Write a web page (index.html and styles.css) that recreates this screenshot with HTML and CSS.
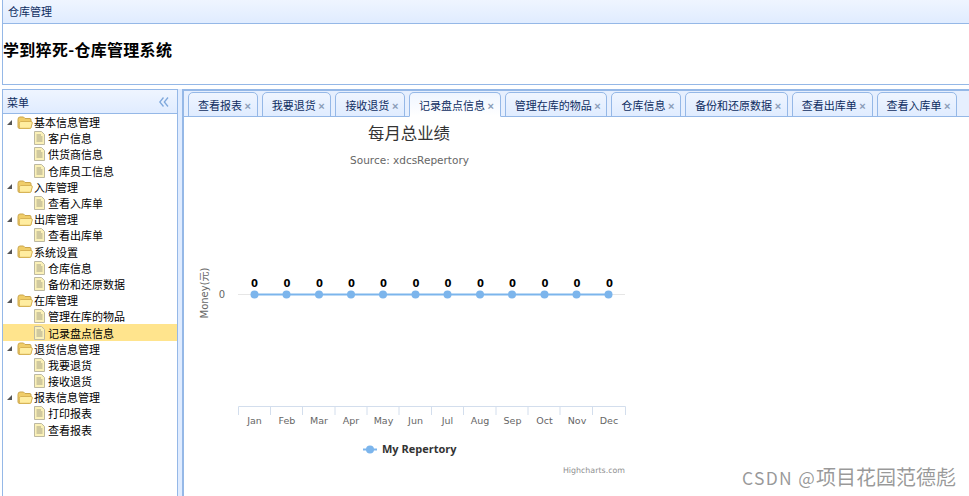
FILE: index.html
```html
<!DOCTYPE html>
<html lang="zh-CN">
<head>
  <meta charset="UTF-8" />
  <title>仓库管理</title>
  <link rel="stylesheet" href="styles.css">
</head>
<body>

  <svg class="icon-defs" width="0" height="0">
    <symbol id="i-arrow" viewBox="0 0 6 6"><path d="M6 0V6H0Z" fill="#555"/></symbol>
    <symbol id="i-folder" viewBox="0 0 16 13">
      <path d="M1 3.500Q1 1 3 1H6.500L8 2.500H13Q14 2.500 14 4V11Q14 12.500 12.500 12.500H3Q1 12.500 1 11Z" fill="#f0cd68" stroke="#cba64c"/>
      <path d="M2.500 11.500Q1.800 6 3.500 5.500H14Q15.500 5.500 15.300 7L14 11.500Q13.800 12.300 12.500 12.300H3.500Q2.700 12.300 2.500 11.500Z" fill="#ffeda0" stroke="#d8b355"/>
    </symbol>
    <symbol id="i-file" viewBox="0 0 11 14">
      <path d="M.5.5H7.500L10.500 3.500V13.500H.5Z" fill="#fbf1b8" stroke="#bdb9a2"/>
      <path d="M2.500 4H7M2.500 6H8.500M2.500 8H8.500M2.500 10H8.500" stroke="#a5a185" fill="none"/>
    </symbol>
  </svg>

  <!-- North -->
  <div class="north">
    <div class="panel-title">仓库管理</div>
    <div class="north-body">
      <h1>学到猝死-仓库管理系统</h1>
    </div>
  </div>

  <div class="layout">

    <!-- Menu -->
    <div class="west">
      <div class="west-title">
        <span>菜单</span>
        <svg class="collapse" width="10" height="10" viewBox="0 0 10 10">
          <path d="M4.500 .5L.8 5L4.500 9.500M9 .5L5.300 5L9 9.500" fill="none" stroke="#7fa8dc" stroke-width="1.300"/>
        </svg>
      </div>
      <ul class="tree">
        <li class="group"><svg class="arrow"><use href="#i-arrow"/></svg><svg class="folder"><use href="#i-folder"/></svg>基本信息管理</li>
        <li class="leaf"><svg class="file"><use href="#i-file"/></svg>客户信息</li>
        <li class="leaf"><svg class="file"><use href="#i-file"/></svg>供货商信息</li>
        <li class="leaf"><svg class="file"><use href="#i-file"/></svg>仓库员工信息</li>
        <li class="group"><svg class="arrow"><use href="#i-arrow"/></svg><svg class="folder"><use href="#i-folder"/></svg>入库管理</li>
        <li class="leaf"><svg class="file"><use href="#i-file"/></svg>查看入库单</li>
        <li class="group"><svg class="arrow"><use href="#i-arrow"/></svg><svg class="folder"><use href="#i-folder"/></svg>出库管理</li>
        <li class="leaf"><svg class="file"><use href="#i-file"/></svg>查看出库单</li>
        <li class="group"><svg class="arrow"><use href="#i-arrow"/></svg><svg class="folder"><use href="#i-folder"/></svg>系统设置</li>
        <li class="leaf"><svg class="file"><use href="#i-file"/></svg>仓库信息</li>
        <li class="leaf"><svg class="file"><use href="#i-file"/></svg>备份和还原数据</li>
        <li class="group"><svg class="arrow"><use href="#i-arrow"/></svg><svg class="folder"><use href="#i-folder"/></svg>在库管理</li>
        <li class="leaf"><svg class="file"><use href="#i-file"/></svg>管理在库的物品</li>
        <li class="leaf selected"><svg class="file"><use href="#i-file"/></svg>记录盘点信息</li>
        <li class="group"><svg class="arrow"><use href="#i-arrow"/></svg><svg class="folder"><use href="#i-folder"/></svg>退货信息管理</li>
        <li class="leaf"><svg class="file"><use href="#i-file"/></svg>我要退货</li>
        <li class="leaf"><svg class="file"><use href="#i-file"/></svg>接收退货</li>
        <li class="group"><svg class="arrow"><use href="#i-arrow"/></svg><svg class="folder"><use href="#i-folder"/></svg>报表信息管理</li>
        <li class="leaf"><svg class="file"><use href="#i-file"/></svg>打印报表</li>
        <li class="leaf"><svg class="file"><use href="#i-file"/></svg>查看报表</li>
      </ul>
    </div>

    <!-- Tabs and chart -->
    <div class="center">
      <div class="tabs">
        <div class="tab">查看报表<span class="close">×</span></div>
        <div class="tab">我要退货<span class="close">×</span></div>
        <div class="tab">接收退货<span class="close">×</span></div>
        <div class="tab active">记录盘点信息<span class="close">×</span></div>
        <div class="tab">管理在库的物品<span class="close">×</span></div>
        <div class="tab">仓库信息<span class="close">×</span></div>
        <div class="tab">备份和还原数据<span class="close">×</span></div>
        <div class="tab">查看出库单<span class="close">×</span></div>
        <div class="tab">查看入库单<span class="close">×</span></div>
      </div>
      <div class="chart">
        <svg width="785" height="379" viewBox="184 117 785 379">
          <text class="chart-title" x="409" y="138.500">每月总业绩</text>
          <text class="chart-sub" x="409.500" y="164">Source: xdcsRepertory</text>

          <text class="y-title" transform="translate(208 293) rotate(-90)">Money(元)</text>
          <text class="y-label" x="222" y="298">0</text>
          <path d="M238 294.500H625" stroke="#e6e6e6"/>

          <path d="M238.500 415V406.500H625.500V415M270.500 406.500V415M302.500 406.500V415M335 406.500V415M367 406.500V415M399 406.500V415M431.500 406.500V415M463.500 406.500V415M496 406.500V415M528 406.500V415M560 406.500V415M592.500 406.500V415" stroke="#d3deed" fill="none"/>
          <g class="x-labels">
            <text x="254.500" y="423.500">Jan</text>
            <text x="287" y="423.500">Feb</text>
            <text x="319" y="423.500">Mar</text>
            <text x="351" y="423.500">Apr</text>
            <text x="383.500" y="423.500">May</text>
            <text x="415.500" y="423.500">Jun</text>
            <text x="447.500" y="423.500">Jul</text>
            <text x="480" y="423.500">Aug</text>
            <text x="512.500" y="423.500">Sep</text>
            <text x="544.500" y="423.500">Oct</text>
            <text x="577" y="423.500">Nov</text>
            <text x="609" y="423.500">Dec</text>
          </g>

          <path d="M254.500 294.500H608.500" stroke="#7cb5ec" stroke-width="2"/>
          <g fill="#7cb5ec">
            <circle cx="254.500" cy="294.500" r="4"/>
            <circle cx="286.500" cy="294.500" r="4"/>
            <circle cx="319" cy="294.500" r="4"/>
            <circle cx="351" cy="294.500" r="4"/>
            <circle cx="383" cy="294.500" r="4"/>
            <circle cx="415.500" cy="294.500" r="4"/>
            <circle cx="447.500" cy="294.500" r="4"/>
            <circle cx="480" cy="294.500" r="4"/>
            <circle cx="512" cy="294.500" r="4"/>
            <circle cx="544.500" cy="294.500" r="4"/>
            <circle cx="576.500" cy="294.500" r="4"/>
            <circle cx="608.500" cy="294.500" r="4"/>
          </g>
          <g class="data-labels">
            <text x="254.500" y="287">0</text>
            <text x="287" y="287">0</text>
            <text x="319.500" y="287">0</text>
            <text x="351.500" y="287">0</text>
            <text x="383.500" y="287">0</text>
            <text x="416" y="287">0</text>
            <text x="448" y="287">0</text>
            <text x="480.500" y="287">0</text>
            <text x="512.500" y="287">0</text>
            <text x="545" y="287">0</text>
            <text x="577" y="287">0</text>
            <text x="609.500" y="287">0</text>
          </g>

          <path d="M363 449.500H377" stroke="#7cb5ec" stroke-width="2"/>
          <circle cx="370" cy="449.500" r="4" fill="#7cb5ec"/>
          <text class="legend" x="382" y="453">My Repertory</text>
          <text class="credits" x="625" y="473">Highcharts.com</text>
        </svg>
      </div>
    </div>
  </div>

  <div class="watermark"><span class="watermark-id">CSDN @</span>项目花园范德彪</div>

</body>
</html>
```

FILE: styles.css
```css
html, body {
  height: 100%;
}

body {
  margin: 0;
  overflow: hidden;
  background-color: #fff;
  color: #000;
  font-family: "Noto Sans CJK SC", "Liberation Sans", sans-serif;
  font-size: 11px;
  display: flex;
  flex-direction: column;
  position: relative;
}

.icon-defs {
  position: absolute;
}

.north {
  margin-left: 2px;
  height: 85px;
  box-sizing: border-box;
  border-left: 1px solid #95b8e7;
  border-bottom: 1px solid #95b8e7;
  flex-shrink: 0;
}

.panel-title {
  height: 23px;
  line-height: 23px;
  padding-left: 5px;
  color: #0e2d5f;
  background: linear-gradient(to bottom, #eff5ff, #e0ecff);
  border-bottom: 1px solid #95b8e7;
}

.north-body h1 {
  margin: 0;
  padding-top: 13px;
  font-size: 16px;
  line-height: 24px;
  font-weight: bold;
  letter-spacing: 0.3px;
}

.layout {
  flex: 1;
  display: flex;
  margin-top: 4px;
  min-height: 0;
  background-color: #fff;
}

.west {
  width: 176px;
  margin-left: 2px;
  box-sizing: border-box;
  border: 1px solid #95b8e7;
  border-bottom: none;
  flex-shrink: 0;
}

.west-title {
  height: 24px;
  box-sizing: border-box;
  padding: 0 8px 0 4px;
  display: flex;
  align-items: center;
  justify-content: space-between;
  color: #0e2d5f;
  background: linear-gradient(to bottom, #eff5ff, #e0ecff);
  border-bottom: 1px solid #95b8e7;
}

.tree {
  list-style: none;
  margin: 0;
  padding: 0;
}

.tree li {
  height: 16.2px;
  line-height: 16px;
  display: flex;
  align-items: center;
  white-space: nowrap;
}

.group {
  padding-left: 4px;
}

.leaf {
  padding-left: 31px;
}

.selected {
  background-color: #ffe48d;
}

.arrow {
  width: 5px;
  height: 5px;
  margin-right: 5px;
}

.folder {
  width: 16px;
  height: 13px;
  margin-right: 1px;
}

.file {
  width: 11px;
  height: 14px;
  margin-right: 3px;
}

.center {
  flex: 1;
  min-width: 0;
  margin-left: 4px;
  border-left: 2px solid #95b8e7;
  border-top: 2px solid #95b8e7;
  box-shadow: -4px 0 0 #e0ecff;
  display: flex;
  flex-direction: column;
}

.tabs {
  height: 26px;
  box-sizing: border-box;
  display: flex;
  align-items: flex-end;
  gap: 4px;
  padding-left: 4px;
  background-color: #e6effe;
  border-bottom: 1px solid #95b8e7;
  flex-shrink: 0;
}

.tab {
  height: 25px;
  margin-bottom: -1px;
  box-sizing: border-box;
  padding: 0 5.750px 0 9px;
  line-height: 24px;
  color: #0e2d5f;
  white-space: nowrap;
  border: 1px solid #95b8e7;
  border-radius: 5px 5px 0 0;
  background: linear-gradient(to bottom, #eff5ff, #e0ecff);
}

.tab.active {
  background: linear-gradient(to bottom, #eff5ff, #fff);
  border-bottom-color: #fff;
}

.close {
  display: inline-block;
  margin-left: 2.500px;
  font-size: 11px;
  font-weight: bold;
  color: #8a9cb8;
  font-family: "Liberation Sans", sans-serif;
}

.chart {
  flex: 1;
  overflow: hidden;
}

.chart svg {
  display: block;
}

.chart text {
  font-family: "DejaVu Sans", "Noto Sans CJK SC", sans-serif;
}

.chart .chart-title {
  font-family: "Noto Sans CJK SC", sans-serif;
  font-size: 16.400px;
  fill: #333;
  text-anchor: middle;
}

.chart-sub {
  font-size: 10.500px;
  fill: #666;
  text-anchor: middle;
}

.y-title {
  font-size: 10px;
  fill: #666;
  text-anchor: middle;
}

.y-label {
  font-size: 10px;
  fill: #666;
  text-anchor: middle;
}

.x-labels text {
  font-size: 9.500px;
  fill: #666;
  text-anchor: middle;
}

.data-labels text {
  font-size: 10px;
  font-weight: bold;
  fill: #000;
  text-anchor: middle;
  stroke: #fff;
  stroke-width: 2px;
  paint-order: stroke;
}

.chart .legend {
  font-family: "Open Sans", sans-serif;
  font-size: 11px;
  font-weight: bold;
  fill: #333;
}

.credits {
  font-size: 7.900px;
  fill: #909090;
  text-anchor: end;
}

.watermark {
  position: absolute;
  left: 742px;
  top: 463px;
  font-size: 20px;
  line-height: 28px;
  color: rgba(120, 120, 120, 0.75);
  white-space: nowrap;
}

.watermark-id {
  font-size: 17.500px;
  letter-spacing: 1.300px;
}
```
